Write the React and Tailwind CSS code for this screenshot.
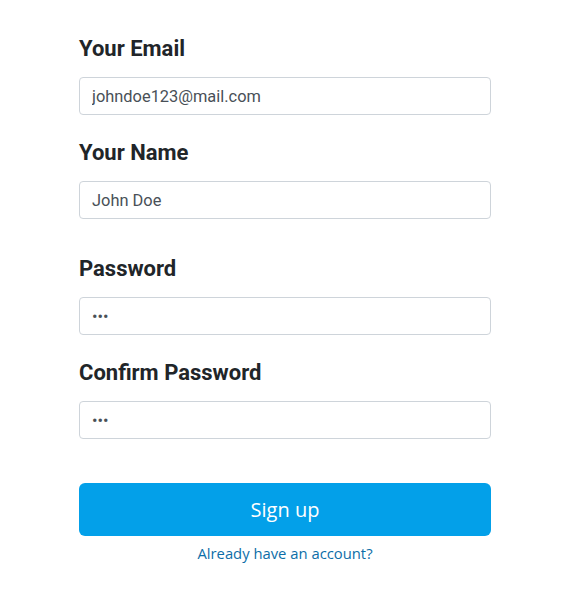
import React, { useState } from "react";

const Field = ({ label, type, value, onChange, className }) => (
  <div className={className}>
    <label className="block text-[22px] leading-[25px] font-bold text-[#212529] mb-4">
      {label}
    </label>
    <input
      type={type}
      value={value}
      onChange={onChange}
      className="block w-full h-[38px] px-3 rounded border border-[#ced4da] bg-white text-[16.4px] text-[#495057] outline-none"
    />
  </div>
);

const App = () => {
  const [email, setEmail] = useState("johndoe123@mail.com");
  const [name, setName] = useState("John Doe");
  const [password, setPassword] = useState("abc");
  const [confirm, setConfirm] = useState("abc");

  return (
    <div className="min-h-[609px] bg-white font-['Roboto',sans-serif]">
      <form
        className="w-[412px] ml-[79px] pt-[36px]"
        onSubmit={(e) => e.preventDefault()}
      >
        <Field label="Your Email" type="email" value={email} onChange={(e) => setEmail(e.target.value)} />
        <Field className="mt-[25px]" label="Your Name" type="text" value={name} onChange={(e) => setName(e.target.value)} />
        <Field className="mt-[37px]" label="Password" type="password" value={password} onChange={(e) => setPassword(e.target.value)} />
        <Field className="mt-[25px]" label="Confirm Password" type="password" value={confirm} onChange={(e) => setConfirm(e.target.value)} />
        <button
          type="submit"
          className="block w-full h-[53px] mt-[44px] rounded-md bg-[#03a0e9] text-white text-[20px] font-['Open_Sans',sans-serif]"
        >
          Sign up
        </button>
        <p className="mt-[7px] text-center text-[14.8px] leading-5 font-['Open_Sans',sans-serif]">
          <a href="#" className="text-[#0d6ea8]">Already have an account?</a>
        </p>
      </form>
    </div>
  );
};

export default App;
